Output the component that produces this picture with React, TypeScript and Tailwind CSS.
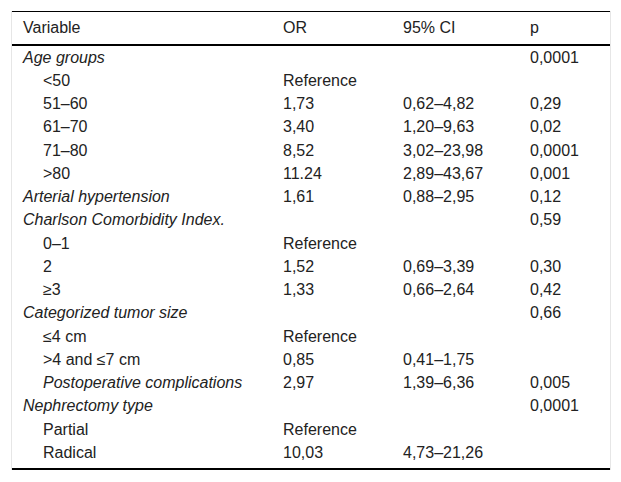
const rows: Array<{ label: string; level: 0 | 1; italic?: boolean; or?: string; ci?: string; p?: string }> = [
  { label: 'Age groups', level: 0, italic: true, p: '0,0001' },
  { label: '<50', level: 1, or: 'Reference' },
  { label: '51\u201360', level: 1, or: '1,73', ci: '0,62\u20134,82', p: '0,29' },
  { label: '61\u201370', level: 1, or: '3,40', ci: '1,20\u20139,63', p: '0,02' },
  { label: '71\u201380', level: 1, or: '8,52', ci: '3,02\u201323,98', p: '0,0001' },
  { label: '>80', level: 1, or: '11.24', ci: '2,89\u201343,67', p: '0,001' },
  { label: 'Arterial hypertension', level: 0, italic: true, or: '1,61', ci: '0,88\u20132,95', p: '0,12' },
  { label: 'Charlson Comorbidity Index.', level: 0, italic: true, p: '0,59' },
  { label: '0\u20131', level: 1, or: 'Reference' },
  { label: '2', level: 1, or: '1,52', ci: '0,69\u20133,39', p: '0,30' },
  { label: '\u22653', level: 1, or: '1,33', ci: '0,66\u20132,64', p: '0,42' },
  { label: 'Categorized tumor size', level: 0, italic: true, p: '0,66' },
  { label: '\u22644 cm', level: 1, or: 'Reference' },
  { label: '>4 and \u22647 cm', level: 1, or: '0,85', ci: '0,41\u20131,75' },
  { label: 'Postoperative complications', level: 1, italic: true, or: '2,97', ci: '1,39\u20136,36', p: '0,005' },
  { label: 'Nephrectomy type', level: 0, italic: true, p: '0,0001' },
  { label: 'Partial', level: 1, or: 'Reference' },
  { label: 'Radical', level: 1, or: '10,03', ci: '4,73\u201321,26' },
]

export default function App() {
  return (
    <div className="w-[621px] h-[482px] bg-white p-[11px] font-['Liberation_Sans',Arial,sans-serif] text-[16px] leading-[18px] text-[#222]">
      <div className="w-[600px] border-x border-[#e6e6e6]">
        <table className="w-full border-collapse table-fixed">
          <colgroup>
            <col className="w-[260px]" />
            <col className="w-[120px]" />
            <col className="w-[127px]" />
            <col />
          </colgroup>
          <thead>
            <tr className="h-[33px] border-t border-b-2 border-black">
              <th className="text-left font-normal pl-[11px] pt-[1px]">Variable</th>
              <th className="text-left font-normal pl-[11px] pt-[1px]">OR</th>
              <th className="text-left font-normal pl-[11px] pt-[1px]">95% CI</th>
              <th className="text-left font-normal pl-[11px] pt-[1px]">p</th>
            </tr>
          </thead>
          <tbody className="border-b-2 border-black">
            {rows.map((r, i) => {
              const last = i === rows.length - 1
              const cell = `pl-[11px] ${last ? 'pt-[4px]' : 'pt-[3px]'}`
              return (
                <tr key={i} className={last ? 'h-[29px] align-top' : 'h-[23.25px]'}>
                  <td className={`${cell} ${r.level === 1 ? 'pl-[31px]' : ''} ${r.italic ? 'italic' : ''}`}>{r.label}</td>
                  <td className={cell}>{r.or}</td>
                  <td className={cell}>{r.ci}</td>
                  <td className={cell}>{r.p}</td>
                </tr>
              )
            })}
          </tbody>
        </table>
      </div>
    </div>
  )
}
